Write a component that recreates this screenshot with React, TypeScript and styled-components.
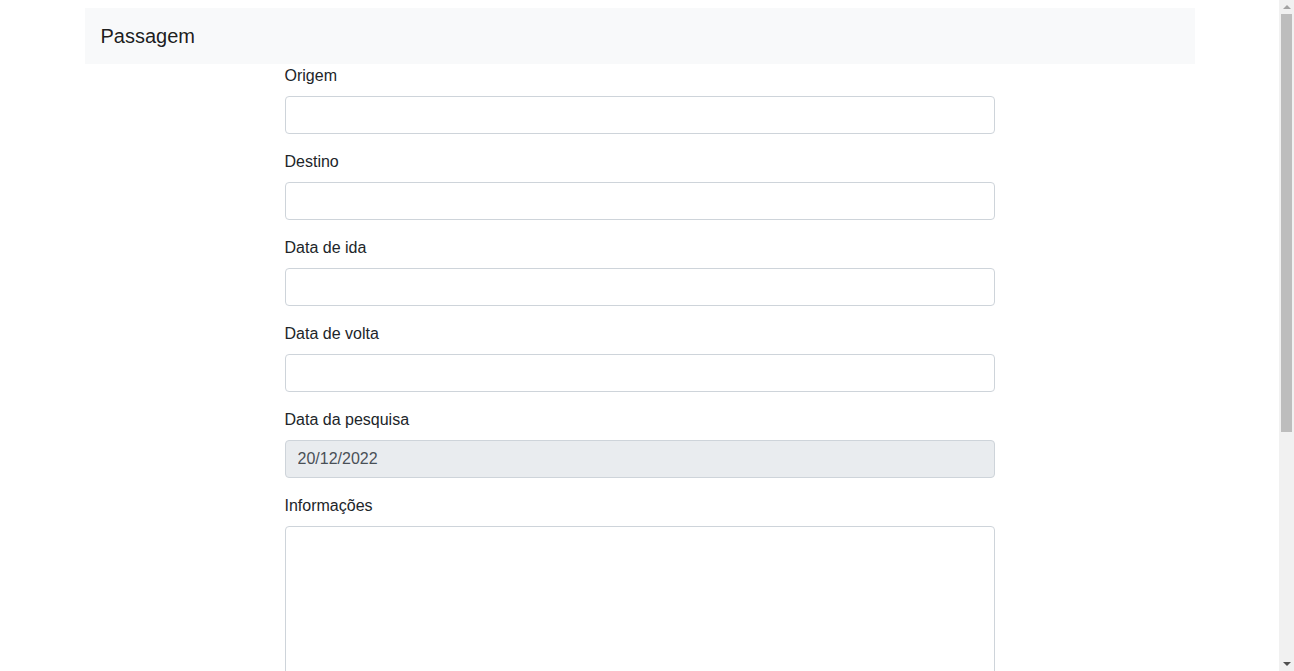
import React from "react";
import styled, { createGlobalStyle } from "styled-components";

const GlobalStyle = createGlobalStyle`
  *, *::before, *::after { box-sizing: border-box; }
  html::-webkit-scrollbar { display: none; }
  html { scrollbar-width: none; }
  body {
    margin: 0;
    font-family: "Liberation Sans", Arial, sans-serif;
    font-size: 16px;
    line-height: 1.5;
    color: #212529;
    background: #fff;
  }
`;

const Page = styled.div`
  width: calc(100% - 15px);
  padding-top: 8px;
`;

const Container = styled.div`
  width: 1140px;
  max-width: 100%;
  margin: 0 auto;
  padding: 0 15px;
`;

const Navbar = styled.nav`
  display: flex;
  align-items: center;
  height: 56px;
  padding: 8px 16px;
  background: #f8f9fa;
`;

const Brand = styled.a`
  font-size: 20px;
  line-height: 30px;
  color: rgba(0, 0, 0, 0.9);
  text-decoration: none;
`;

const Form = styled.form`
  width: 710px;
  margin: 0 auto;
`;

const Group = styled.div`
  margin-bottom: 16px;
`;

const Label = styled.label`
  display: block;
  margin-bottom: 8px;
  line-height: 24px;
`;

const Input = styled.input`
  display: block;
  width: 100%;
  height: 38px;
  padding: 6px 12px;
  font-family: inherit;
  font-size: 16px;
  line-height: 1.5;
  color: #495057;
  background: #fff;
  border: 1px solid #ced4da;
  border-radius: 4px;
  outline: none;
  &:disabled {
    background: #e9ecef;
    opacity: 1;
  }
`;

const TextArea = styled.textarea<{ $h: number }>`
  display: block;
  width: 100%;
  height: ${(p) => p.$h}px;
  padding: 6px 12px;
  font-family: inherit;
  font-size: 16px;
  line-height: 1.5;
  color: #495057;
  background: #fff;
  border: 1px solid #ced4da;
  border-radius: 4px;
  outline: none;
  resize: vertical;
`;

/* Browser scrollbar as drawn in the screenshot, overlaid at the right edge */
const Scrollbar = styled.div`
  position: fixed;
  top: 0;
  right: 0;
  width: 15px;
  height: 100vh;
  background: #f1f1f1;
  display: flex;
  flex-direction: column;
  align-items: center;
`;

const Arrow = styled.div<{ $down?: boolean }>`
  flex: none;
  height: 14px;
  width: 15px;
  display: flex;
  align-items: center;
  justify-content: center;
  &::before {
    content: "";
    width: 0;
    height: 0;
    border-left: 4px solid transparent;
    border-right: 4px solid transparent;
    ${(p) =>
      p.$down
        ? "border-top: 4px solid #505050;"
        : "border-bottom: 4px solid #a3a3a3;"}
  }
`;

const Track = styled.div`
  flex: 1;
  width: 15px;
  display: flex;
  justify-content: center;
`;

const Thumb = styled.div`
  width: 11px;
  height: 418px;
  background: #bdbdbd;
`;

const fields = ["Origem", "Destino", "Data de ida", "Data de volta"];

export default function App() {
  return (
    <>
      <GlobalStyle />
      <Page>
        <Container>
          <Navbar>
            <Brand href="#">Passagem</Brand>
          </Navbar>
          <Form onSubmit={(e) => e.preventDefault()}>
            {fields.map((f) => (
              <Group key={f}>
                <Label>{f}</Label>
                <Input type="text" />
              </Group>
            ))}
            <Group>
              <Label>Data da pesquisa</Label>
              <Input type="text" value="20/12/2022" disabled readOnly />
            </Group>
            <Group>
              <Label>Informações</Label>
              <TextArea $h={490} />
            </Group>
          </Form>
        </Container>
      </Page>
      <Scrollbar aria-hidden>
        <Arrow />
        <Track>
          <Thumb />
        </Track>
        <Arrow $down />
      </Scrollbar>
    </>
  );
}
